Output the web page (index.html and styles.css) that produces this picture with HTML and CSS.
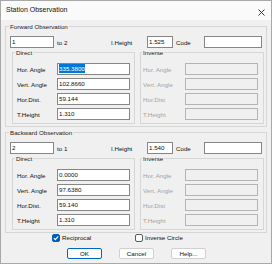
FILE: index.html
```html
<!DOCTYPE html>
<html>
<head>
<meta charset="utf-8">
<link rel="stylesheet" href="styles.css">
</head>
<body>
<div class="window">
  <div class="titlebar">
    <span class="title">Station Observation</span>
    <svg class="close" width="7" height="7" viewBox="0 0 7 7"><path d="M0.5 0.5L6.5 6.5M6.5 0.5L0.5 6.5" stroke="#222" stroke-width="0.9" fill="none"/></svg>
  </div>
  <div class="body">
    <div class="group obs">
      <span class="glabel">Forward Observation</span>
      <div class="toprow">
        <div class="inp pt">1</div>
        <span class="to">to 2</span>
        <span class="ih">I.Height</span>
        <div class="inp ihv">1.525</div>
        <span class="code">Code</span>
        <div class="inp codev"></div>
      </div>
      <div class="cols">
        <div class="group sub direct">
          <span class="glabel">Direct</span>
          <div class="frow"><span class="lbl">Hor. Angle</span><div class="inp fld"><span class="hl">335.3800</span></div></div>
          <div class="frow"><span class="lbl">Vert. Angle</span><div class="inp fld">102.8660</div></div>
          <div class="frow"><span class="lbl">Hor.Dist.</span><div class="inp fld">59.144</div></div>
          <div class="frow"><span class="lbl">T.Height</span><div class="inp fld">1.310</div></div>
        </div>
        <div class="group sub inverse">
          <span class="glabel">Inverse</span>
          <div class="frow"><span class="lbl">Hor. Angle</span><div class="inp fld off"></div></div>
          <div class="frow"><span class="lbl">Vert. Angle</span><div class="inp fld off"></div></div>
          <div class="frow"><span class="lbl">Hor.Dist</span><div class="inp fld off"></div></div>
          <div class="frow"><span class="lbl">T.Height</span><div class="inp fld off"></div></div>
        </div>
      </div>
    </div>

    <div class="group obs back">
      <span class="glabel">Backward Observation</span>
      <div class="toprow">
        <div class="inp pt">2</div>
        <span class="to">to 1</span>
        <span class="ih">I.Height</span>
        <div class="inp ihv">1.540</div>
        <span class="code">Code</span>
        <div class="inp codev"></div>
      </div>
      <div class="cols">
        <div class="group sub direct">
          <span class="glabel">Direct</span>
          <div class="frow"><span class="lbl">Hor. Angle</span><div class="inp fld">0.0000</div></div>
          <div class="frow"><span class="lbl">Vert. Angle</span><div class="inp fld">97.6380</div></div>
          <div class="frow"><span class="lbl">Hor.Dist.</span><div class="inp fld">59.140</div></div>
          <div class="frow"><span class="lbl">T.Height</span><div class="inp fld">1.310</div></div>
        </div>
        <div class="group sub inverse">
          <span class="glabel">Inverse</span>
          <div class="frow"><span class="lbl">Hor. Angle</span><div class="inp fld off"></div></div>
          <div class="frow"><span class="lbl">Vert. Angle</span><div class="inp fld off"></div></div>
          <div class="frow"><span class="lbl">Hor.Dist</span><div class="inp fld off"></div></div>
          <div class="frow"><span class="lbl">T.Height</span><div class="inp fld off"></div></div>
        </div>
      </div>
    </div>

    <div class="checks">
      <div class="chk rec"><span class="box on"><svg width="8" height="8" viewBox="0 0 8 8"><path d="M1.8 4.2L3.3 5.6L6.2 2.4" stroke="#fff" stroke-width="1.1" fill="none"/></svg></span><span>Reciprocal</span></div>
      <div class="chk"><span class="box"></span><span>Inverse Circle</span></div>
    </div>

    <div class="buttons">
      <div class="btn def">OK</div>
      <div class="btn">Cancel</div>
      <div class="btn">Help...</div>
    </div>
  </div>
</div>
</body>
</html>
```

FILE: styles.css
```css
* {
  box-sizing: border-box;
  margin: 0;
  padding: 0;
}

body {
  margin: 0;
  background: #ffffff;
  font-family: "Liberation Sans", Arial, sans-serif;
  font-size: 6.2px;
  color: #111;
}

.window {
  width: 272px;
  height: 264px;
  border: 1px solid #a8a8a8;
  background: #f0f0f0;
  display: flex;
  flex-direction: column;
}

.titlebar {
  height: 19px;
  background: #fafafa;
  display: flex;
  align-items: center;
  justify-content: space-between;
  padding: 0 6px 2px 5px;
}

.title {
  font-size: 7px;
  color: #111;
}

.close {
  display: block;
  margin-top: 6px;
}

.body {
  padding: 6px 4px 0 4px;
}

.group {
  position: relative;
  border: 1px solid #d6d6d6;
}

.glabel {
  position: absolute;
  top: -4px;
  left: 3px;
  padding: 0 1px;
  line-height: 7px;
  background: #f0f0f0;
  color: #1a1a1a;
}

.obs {
  padding: 9px 1px 2px 4px;
}

.back {
  margin-top: 5px;
}

.toprow {
  display: flex;
  align-items: center;
  height: 12px;
}

.inp {
  height: 12px;
  border: 1px solid #868686;
  background: #ffffff;
  padding-left: 1px;
  line-height: 10px;
  white-space: nowrap;
  overflow: hidden;
}

.pt { width: 44px; }

.to {
  margin-left: 3px;
  width: 54px;
}

.ih { width: 36px; }

.ihv { width: 26px; }

.code {
  padding-left: 3px;
  width: 31px;
}

.codev { width: 58px; }

.cols {
  display: flex;
  gap: 5px;
  margin-top: 4px;
  margin-left: 2px;
}

.sub {
  padding: 10px 4px 3px 4px;
}

.sub .glabel {
  left: 2px;
}

.direct { width: 123px; }

.inverse {
  width: 124px;
  padding-left: 2px;
}

.inverse .glabel { left: 1px; }

.frow {
  display: flex;
  align-items: center;
  height: 12px;
}

.frow + .frow { margin-top: 3px; }

.lbl {
  width: 40px;
  white-space: nowrap;
}

.inverse .lbl {
  width: 42px;
  color: #a3a3a3;
}

.fld { width: 73px; }

.off {
  background: #f0f0f0;
  border-color: #b4b4b4;
}

.hl {
  background: #0078d7;
  color: #ffffff;
  display: inline-block;
  line-height: 9px;
}

.checks {
  display: flex;
  align-items: center;
  height: 9px;
  padding-left: 47px;
}

.chk {
  display: flex;
  align-items: center;
  gap: 2px;
}

.rec { width: 83px; }

.box {
  width: 8px;
  height: 8px;
  border: 1px solid #5a5a5a;
  border-radius: 2px;
  background: #fff;
  display: flex;
}

.box.on {
  background: #005fb8;
  border-color: #005fb8;
}

.box svg {
  margin: -1px;
}

.buttons {
  display: flex;
  gap: 17px;
  margin-top: 6px;
  padding-left: 62px;
}

.btn {
  width: 35px;
  height: 11px;
  border: 1px solid #d0d0d0;
  border-radius: 2px;
  background: #fdfdfd;
  display: flex;
  align-items: center;
  justify-content: center;
}

.btn.def {
  border-color: #0067c0;
}
```
